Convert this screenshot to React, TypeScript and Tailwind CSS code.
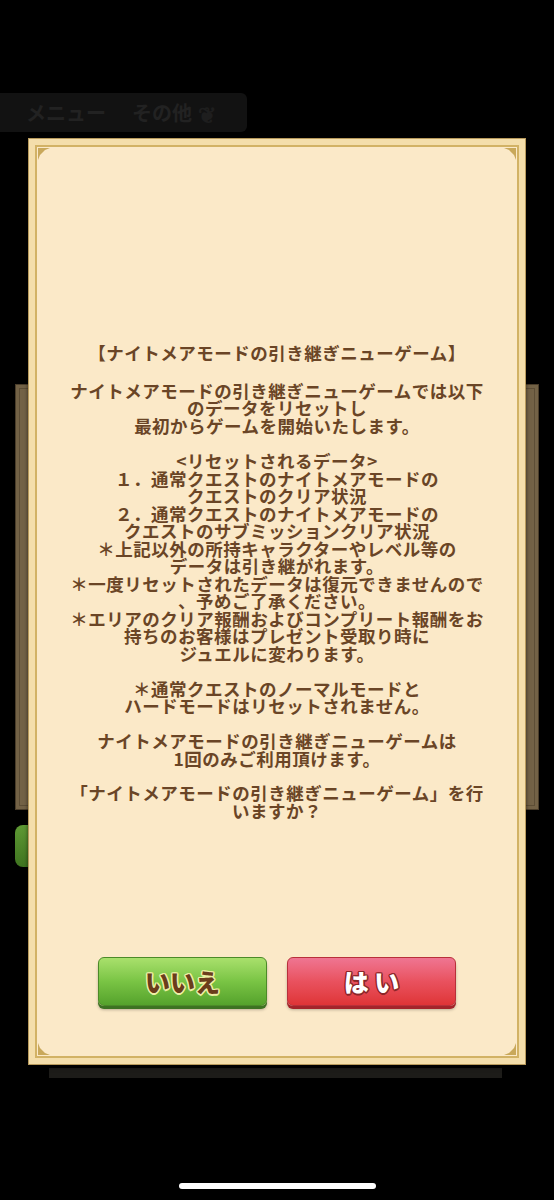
import React from 'react';

const FONT = '"Noto Sans CJK JP", "Noto Sans", sans-serif';

type Para = { lines: string[]; gap: string };

const paragraphs: Para[] = [
  { gap: 'mt-0', lines: ['【ナイトメアモードの引き継ぎニューゲーム】'] },
  {
    gap: 'mt-[20px]',
    lines: [
      'ナイトメアモードの引き継ぎニューゲームでは以下',
      'のデータをリセットし',
      '最初からゲームを開始いたします。',
    ],
  },
  {
    gap: 'mt-[18px]',
    lines: [
      '<リセットされるデータ>',
      '１．通常クエストのナイトメアモードの',
      'クエストのクリア状況',
      '２．通常クエストのナイトメアモードの',
      'クエストのサブミッションクリア状況',
      '＊上記以外の所持キャラクターやレベル等の',
      'データは引き継がれます。',
      '＊一度リセットされたデータは復元できませんので',
      '、予めご了承ください。',
      '＊エリアのクリア報酬およびコンプリート報酬をお',
      '持ちのお客様はプレゼント受取り時に',
      'ジュエルに変わります。',
    ],
  },
  {
    gap: 'mt-[17.5px]',
    lines: ['＊通常クエストのノーマルモードと', 'ハードモードはリセットされません。'],
  },
  {
    gap: 'mt-[17.5px]',
    lines: ['ナイトメアモードの引き継ぎニューゲームは', '1回のみご利用頂けます。'],
  },
  {
    gap: 'mt-[17px]',
    lines: ['「ナイトメアモードの引き継ぎニューゲーム」を行', 'いますか？'],
  },
];

const Corner: React.FC<{ className: string; rotate: string }> = ({ className, rotate }) => (
  <svg
    width="12"
    height="12"
    viewBox="0 0 12 12"
    className={`absolute ${className} ${rotate}`}
  >
    <path d="M0 0 L12 0 L7 2 L2 7 L0 12 Z" fill="#c9a85a" />
  </svg>
);

export default function App() {
  return (
    <div className="relative w-[554px] h-[1200px] bg-black overflow-hidden" style={{ fontFamily: FONT }}>
      {/* dim game screen behind the dialog */}
      <div className="pt-[93px]">
        <div className="flex items-center w-[247px] h-[39px] bg-[#121212] rounded-r-md pl-[26px] text-[20px] font-bold text-[#222222] leading-none">
          <span>メニュー</span>
          <span className="ml-[26px]">その他</span>
          <span className="ml-[6px] text-[#1e1e1e] text-[22px]">❦</span>
        </div>
        <div className="mt-[252px] ml-[15px] w-[524px] h-[426px] bg-[#736246] border border-[#4a3d2a] p-[3px]">
          <div className="w-full h-full border border-[#5d4e36]" />
        </div>
        <div className="mt-[15px] ml-[15px] w-[40px] h-[42px] rounded-l-lg bg-gradient-to-b from-[#5f9a34] to-[#3f7420]" />
        <div className="mt-[201px] ml-[49px] w-[453px] h-[10px] bg-[#1d1c19]" />
        <div className="mt-[105px] mx-auto w-[197px] h-[6px] rounded-full bg-white" />
      </div>

      {/* modal dialog */}
      <div className="absolute left-[28px] top-[138px] w-[498px] h-[927px] bg-[#f4deab] border border-[#b89a5c] p-[6px] shadow-[0_2px_4px_rgba(0,0,0,0.6)]">
        <div className="relative w-full h-full bg-[#fbe9c8] border-2 border-[#d2b265] flex flex-col items-center pt-[197px]">
          <Corner className="left-[1px] top-[1px]" rotate="" />
          <Corner className="right-[1px] top-[1px]" rotate="rotate-90" />
          <Corner className="right-[1px] bottom-[1px]" rotate="rotate-180" />
          <Corner className="left-[1px] bottom-[1px]" rotate="-rotate-90" />

          <div className="text-center text-[17.5px] tracking-[0.5px] leading-[17.5px] font-bold text-[#6a4526] whitespace-nowrap">
            {paragraphs.map((p, i) => (
              <div key={i} className={p.gap}>
                {p.lines.map((l, j) => (
                  <div key={j}>{l}</div>
                ))}
              </div>
            ))}
          </div>

          <div className="mt-[138px] flex gap-[20px]">
            <button
              type="button"
              className="w-[169px] h-[49px] rounded-[6px] border border-[#4c8a28] bg-gradient-to-b from-[#a9e06c] via-[#79c444] to-[#55a22c] shadow-[0_3px_0_#3d7222,0_4px_3px_rgba(0,0,0,0.25)] text-[25px] font-black leading-none text-[#6b3d1b] [text-shadow:1.5px_0_0_#eef0a4,-1.5px_0_0_#eef0a4,0_1.5px_0_#eef0a4,0_-1.5px_0_#eef0a4,1px_1px_0_#eef0a4,-1px_-1px_0_#eef0a4,1px_-1px_0_#eef0a4,-1px_1px_0_#eef0a4]"
            >
              いいえ
            </button>
            <button
              type="button"
              className="w-[169px] h-[49px] rounded-[6px] border border-[#b8303a] bg-gradient-to-b from-[#ef7592] via-[#e9515e] to-[#df3436] shadow-[0_3px_0_#a4242a,0_4px_3px_rgba(0,0,0,0.25)] text-[25px] font-black leading-none text-white [text-shadow:1.5px_0_0_#8c2528,-1.5px_0_0_#8c2528,0_1.5px_0_#8c2528,0_-1.5px_0_#8c2528,1px_1px_0_#8c2528,-1px_-1px_0_#8c2528,1px_-1px_0_#8c2528,-1px_1px_0_#8c2528]"
            >
              は い
            </button>
          </div>
        </div>
      </div>
    </div>
  );
}
